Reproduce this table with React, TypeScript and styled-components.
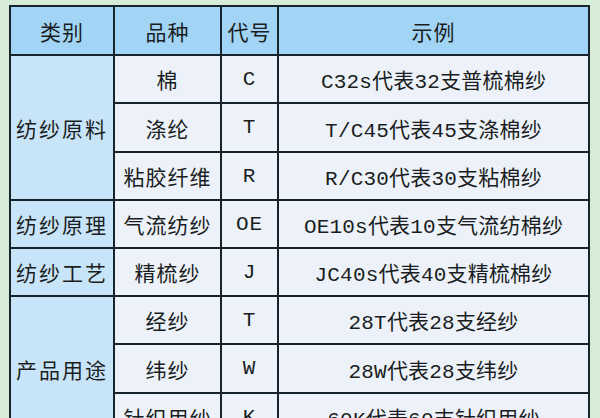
import React from "react";
import styled, { createGlobalStyle } from "styled-components";

const Global = createGlobalStyle`
  html, body { margin: 0; padding: 0; background: #d7ecd8; }
  body { width: 600px; height: 418px; overflow: hidden; }
`;

const Page = styled.div`
  padding: 5px 0 0 9px;
  width: 600px;
  height: 418px;
  box-sizing: border-box;
  overflow: hidden;
`;

const Table = styled.table`
  border-collapse: collapse;
  table-layout: fixed;
  width: 579px;
  font-family: "Liberation Mono", "Noto Sans CJK SC", monospace;
  font-size: 21px;
  color: #1a1e22;
  border: 2px solid #18242c;
`;

const HeadCell = styled.th`
  background: #a2d4f6;
  font-weight: 400;
  height: 47px;
  padding: 0;
  border: 2px solid #18242c;
  text-align: center;
  letter-spacing: 1px;
`;

const Row = styled.tr<{ $h?: number }>`
  height: ${(p) => p.$h ?? 48}px;
`;

const CatCell = styled.td`
  background: #c8e4f8;
  border: 2px solid #18242c;
  text-align: center;
  padding: 0;
  letter-spacing: 2px;
`;

const Cell = styled.td<{ $tight?: boolean }>`
  background: #edf2fa;
  border: 2px solid #18242c;
  text-align: center;
  padding: 0;
  letter-spacing: ${(p) => (p.$tight ? "0.2px" : "1px")};
  white-space: nowrap;
`;

type R = { kind: string; code: string; ex: string };
type G = { cat: string; rows: R[] };

const data: G[] = [
  {
    cat: "纺纱原料",
    rows: [
      { kind: "棉", code: "C", ex: "C32s代表32支普梳棉纱" },
      { kind: "涤纶", code: "T", ex: "T/C45代表45支涤棉纱" },
      { kind: "粘胶纤维", code: "R", ex: "R/C30代表30支粘棉纱" },
    ],
  },
  {
    cat: "纺纱原理",
    rows: [{ kind: "气流纺纱", code: "OE", ex: "OE10s代表10支气流纺棉纱" }],
  },
  {
    cat: "纺纱工艺",
    rows: [{ kind: "精梳纱", code: "J", ex: "JC40s代表40支精梳棉纱" }],
  },
  {
    cat: "产品用途",
    rows: [
      { kind: "经纱", code: "T", ex: "28T代表28支经纱" },
      { kind: "纬纱", code: "W", ex: "28W代表28支纬纱" },
      { kind: "针织用纱", code: "K", ex: "60K代表60支针织用纱" },
    ],
  },
];

export default function App() {
  return (
    <>
      <Global />
      <Page>
        <Table>
          <colgroup>
            <col style={{ width: 104 }} />
            <col style={{ width: 107 }} />
            <col style={{ width: 57 }} />
            <col style={{ width: 311 }} />
          </colgroup>
          <thead>
            <tr>
              <HeadCell>类别</HeadCell>
              <HeadCell>品种</HeadCell>
              <HeadCell>代号</HeadCell>
              <HeadCell>示例</HeadCell>
            </tr>
          </thead>
          <tbody>
            {data.map((g) =>
              g.rows.map((r, i) => (
                <Row key={g.cat + i} $h={i % 2 === 0 ? 48 : 49}>
                  {i === 0 && <CatCell rowSpan={g.rows.length}>{g.cat}</CatCell>}
                  <Cell>{r.kind}</Cell>
                  <Cell>{r.code}</Cell>
                  <Cell $tight>{r.ex}</Cell>
                </Row>
              ))
            )}
          </tbody>
        </Table>
      </Page>
    </>
  );
}
